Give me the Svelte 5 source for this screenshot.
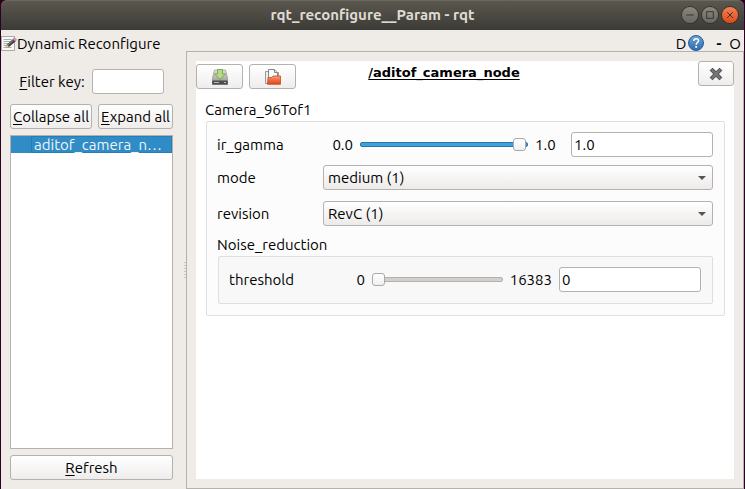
<script>
  let filter = $state('');
  let gamma = $state(1);
  let threshold = $state(0);
  let gammaText = $state('1.0');
  let thresholdText = $state('0');
  let mode = $state('medium (1)');
  let revision = $state('RevC (1)');
</script>

<div class="window">
  <header class="titlebar">
    <h1>rqt_reconfigure__Param - rqt</h1>
    <div class="controls">
      <button class="ctl" aria-label="Minimize">
        <svg viewBox="0 0 17 17"><path d="M4.5 8.5h8" /></svg>
      </button>
      <button class="ctl" aria-label="Maximize">
        <svg viewBox="0 0 17 17"><rect x="5" y="5" width="7" height="7" /></svg>
      </button>
      <button class="ctl close" aria-label="Close">
        <svg viewBox="0 0 17 17"><path d="M5.500 5.500l6 6M11.500 5.500l-6 6" /></svg>
      </button>
    </div>
  </header>

  <div class="dock">
    <svg class="dock-icon" viewBox="0 0 16 16">
      <rect x="0.5" y="0.5" width="13" height="14" fill="#f8f8f7" stroke="#aaa" />
      <path d="M2.5 3.5h8M2.5 5.5h7M2.5 7.5h5M2.5 9.5h4M2.5 11.5h8" stroke="#aaa" />
      <path d="M5 12l1-3.500L12 3l2.500 2.500L8 11z" fill="#444" />
      <path d="M5 12l1-3.500L8 11z" fill="#e8d67a" />
      <path d="M7 9l5.500-5" stroke="#888" />
      <path d="M12 3l1.500-1 2 1.500-1.200 2z" fill="#d890c0" stroke="#9a6590" stroke-width=".5" />
    </svg>
    <span class="dock-name">Dynamic Reconfigure</span>
    <button class="flat">D</button>
    <button class="flat help" aria-label="Help">
      <svg viewBox="0 0 16 16">
        <defs>
          <linearGradient id="blue" x2="0" y2="1">
            <stop stop-color="#6ba4d6" /><stop offset="1" stop-color="#2c6cac" />
          </linearGradient>
        </defs>
        <circle cx="8" cy="8" r="7.500" fill="url(#blue)" stroke="#245f9c" />
        <path d="M5.700 6C5.700 2.800 10.500 3 10.500 5.700 10.500 7.500 8.200 7.600 8.200 9.700" fill="none" stroke="#fff" stroke-width="1.500" />
        <rect x="7.300" y="11" width="1.800" height="1.800" fill="#fff" />
      </svg>
    </button>
    <button class="flat dash">-</button>
    <button class="flat">O</button>
  </div>

  <main>
    <aside>
      <div class="filter">
        <label for="filter"><u>F</u>ilter key:</label>
        <input id="filter" class="field" bind:value={filter} />
      </div>
      <div class="pair">
        <button class="btn"><u>C</u>ollapse all</button>
        <button class="btn"><u>E</u>xpand all</button>
      </div>
      <ul>
        <li><span>aditof_camera_n…</span></li>
      </ul>
      <button class="btn"><u>R</u>efresh</button>
    </aside>
    <div class="grip"><i></i></div>

    <section class="frame">
      <div class="sheet">
        <div class="top">
          <div class="heading">
            <div class="tools">
              <button class="btn" aria-label="Save parameters">
                <svg viewBox="0 0 16 16">
                  <defs>
                    <linearGradient id="disk" x2="0" y2="1">
                      <stop stop-color="#e4e4e2" /><stop offset="1" stop-color="#8a8a88" />
                    </linearGradient>
                  </defs>
                  <path d="M2.500 1h11L16 11v4.500H0V11z" fill="url(#disk)" stroke="#888" stroke-width=".6" />
                  <rect x=".3" y="11.500" width="15.400" height="4" rx=".8" fill="#4b4d4e" />
                  <path d="M2 13.500h5M12 13.500h2" stroke="#bbb" />
                  <path d="M5.500.500h5v4.500h3L8 10.300 2.500 5h3z" fill="#b4dc80" stroke="#6f9f45" stroke-width=".8" />
                </svg>
              </button>
              <button class="btn" aria-label="Load parameters">
                <svg viewBox="0 0 16 16">
                  <defs>
                    <linearGradient id="folder" x2="0" y2="1">
                      <stop stop-color="#f7a080" /><stop offset=".5" stop-color="#ec6d3e" /><stop offset="1" stop-color="#d9481b" />
                    </linearGradient>
                  </defs>
                  <path d="M.5 14.500V2.500h3l1 1h9v11z" fill="#eee" stroke="#999" />
                  <path d="M3.500 13V.500h6l3 3V13z" fill="#fafafa" stroke="#888" />
                  <path d="M9.500.500v3h3" fill="#ddd" stroke="#888" />
                  <path d="M2.500 15.300l.500-6.800h4l1-1.500h7.500v8.300z" fill="url(#folder)" stroke="#c74a20" stroke-width=".8" />
                </svg>
              </button>
            </div>
            <h2>/aditof_camera_node</h2>
          </div>
          <button class="btn remove" aria-label="Close node">
            <svg viewBox="0 0 16 16">
              <path d="M4.500 4.500l7 7M11.500 4.500l-7 7" stroke="#555" stroke-width="4" stroke-linecap="square" />
              <path d="M4.500 4.500l7 7M11.500 4.500l-7 7" stroke="#777" stroke-width="2" stroke-linecap="square" />
            </svg>
          </button>
        </div>

        <h3>Camera_96Tof1</h3>
        <div class="group">
          <div class="row">
            <label for="gamma">ir_gamma</label>
            <span class="min">0.0</span>
            <input id="gamma" class="full" type="range" min="0" max="1" step="0.01" bind:value={gamma} />
            <span class="max">1.0</span>
            <input class="field value" aria-label="ir_gamma value" bind:value={gammaText} />
          </div>
          <div class="row">
            <label for="mode">mode</label>
            <div class="combo">
              <select id="mode" bind:value={mode}><option>medium (1)</option></select>
            </div>
          </div>
          <div class="row spaced">
            <label for="revision">revision</label>
            <div class="combo">
              <select id="revision" bind:value={revision}><option>RevC (1)</option></select>
            </div>
          </div>
          <h3 class="sub">Noise_reduction</h3>
          <div class="group inner">
            <div class="row">
              <label for="threshold">threshold</label>
              <span class="min">0</span>
              <input id="threshold" type="range" min="0" max="16383" bind:value={threshold} />
              <span>16383</span>
              <input class="field value" aria-label="threshold value" bind:value={thresholdText} />
            </div>
          </div>
        </div>
      </div>
    </section>
  </main>
</div>

<style>
  :global(body) {
    margin: 0;
    background: #2c001e;
  }
  * {
    box-sizing: border-box;
  }
  .window {
    min-height: 100vh;
    display: flex;
    flex-direction: column;
    padding: 0 1px;
    font: 15px/20px Ubuntu, 'Noto Sans', sans-serif;
    color: #000;
  }
  button,
  input,
  select {
    font: inherit;
    color: inherit;
    margin: 0;
  }
  h1,
  h2,
  h3,
  ul {
    margin: 0;
    padding: 0;
  }
  u {
    text-underline-offset: 2px;
    text-decoration-skip-ink: none;
  }
  svg {
    display: block;
    width: 16px;
    height: 16px;
  }
  .titlebar {
    height: 30px;
    display: grid;
    grid-template-columns: 1fr auto 1fr;
    align-items: center;
    padding: 0 6px;
    border-radius: 6px 6px 0 0;
    background: linear-gradient(#5b584f, #3d3b37);
    box-shadow: inset 0 1px #6a675e;
  }
  h1 {
    grid-column: 2;
    font-size: 15px;
    font-weight: 700;
    color: #dfdbd2;
  }
  .controls {
    display: flex;
    justify-content: flex-end;
    gap: 4px;
  }
  .ctl {
    width: 16px;
    height: 16px;
    padding: 0;
    border: 0;
    border-radius: 50%;
    background: linear-gradient(#8a877e, #6a6760);
    box-shadow: 0 0 0 1px #34322e;
  }
  .ctl.close {
    background: linear-gradient(#f58052, #df4a18);
  }
  .ctl svg {
    fill: none;
    stroke: #35332f;
  }
  .dock {
    position: relative;
    height: 21px;
    flex: none;
    display: flex;
    align-items: center;
    padding: 6px 1px 0 0;
    background: #efebe7;
  }
  .dock-name {
    flex: 1;
  }
  .flat {
    padding: 0 2px;
    border: 0;
    background: none;
  }
  .help {
    padding: 0 0 1px;
  }
  .dash {
    padding: 0 6px 0 12px;
    font-weight: 700;
  }
  main {
    flex: 1;
    display: flex;
    background: #efebe7;
  }
  aside {
    width: 172px;
    display: flex;
    flex-direction: column;
    padding: 18px 0 9px 9px;
  }
  .filter {
    display: flex;
    justify-content: center;
    align-items: center;
    gap: 7px;
    margin-bottom: 10px;
  }
  .filter .field {
    width: 72px;
  }
  .field {
    height: 25px;
    min-width: 0;
    padding: 0 2px;
    border: 1px solid #b4b1ae;
    border-radius: 3px;
    background: #fff;
  }
  .pair {
    display: flex;
    gap: 6px;
    margin-bottom: 6px;
  }
  .pair .btn {
    flex: auto;
  }
  .btn {
    height: 25px;
    padding: 0;
    border: 1px solid #b4b1ae;
    border-radius: 3px;
    background: linear-gradient(#fff, #efedec);
    white-space: nowrap;
  }
  ul {
    flex: 1;
    margin-bottom: 6px;
    border: 1px solid #b4b1ae;
    background: #fff;
    list-style: none;
  }
  li {
    height: 17px;
    padding-left: 20px;
    background: #308cc6;
    color: #eff3f7;
  }
  li span {
    display: block;
    height: 17px;
    padding-left: 2px;
    border: 1px solid #2a7db2;
    line-height: 16px;
    white-space: nowrap;
  }
  .grip {
    width: 13px;
    display: flex;
    align-items: center;
    justify-content: flex-end;
  }
  .grip i {
    width: 2px;
    height: 17px;
    background: repeating-linear-gradient(#c8c5c1 0 1px, transparent 1px 3px);
  }
  .frame {
    flex: 1;
    display: flex;
    padding: 9px;
    border: 1px solid #b4b1ae;
  }
  .sheet {
    flex: 1;
    background: #fff;
  }
  .top {
    display: flex;
    gap: 6px;
    height: 39px;
  }
  .heading {
    flex: 1;
    display: grid;
    grid-template-columns: 1fr auto 1fr;
    align-items: start;
  }
  .tools {
    display: flex;
    gap: 6px;
    padding-top: 3px;
  }
  .tools .btn {
    width: 47px;
  }
  .tools svg,
  .remove svg {
    margin: auto;
  }
  .remove {
    width: 36px;
  }
  h2 {
    font: 700 13px/24px 'DejaVu Sans', sans-serif;
    text-decoration: underline;
    text-underline-offset: 2px;
    text-decoration-skip-ink: none;
  }
  h3 {
    padding-left: 9px;
    font-size: 15px;
    font-weight: 400;
  }
  .sub {
    padding: 0;
    margin-top: 9px;
  }
  .group {
    margin: 1px 9px 0 10px;
    padding: 10px 11px 11px 10px;
    border: 1px solid #dfdfdf;
    border-radius: 2px;
    background: #fcfcfc;
  }
  .inner {
    margin: 1px 0 0 1px;
    background: #f8f8f8;
  }
  .row {
    display: flex;
    align-items: center;
    gap: 7px;
    margin-bottom: 8px;
  }
  .spaced {
    margin-top: 11px;
  }
  .inner .row {
    margin: 0;
  }
  .row label {
    width: 99px;
  }
  .min {
    width: 30px;
    text-align: right;
  }
  .max {
    width: 29px;
  }
  .value {
    width: 142px;
  }
  .combo {
    position: relative;
    flex: 1;
    display: flex;
  }
  .combo::after {
    content: '';
    position: absolute;
    right: 7px;
    top: 11px;
    border: 4px solid transparent;
    border-top-color: #555;
    border-bottom: 0;
    pointer-events: none;
  }
  select {
    appearance: none;
    flex: 1;
    height: 25px;
    padding: 0 4px;
    border: 1px solid #b4b1ae;
    border-radius: 3px;
    background: linear-gradient(#fff, #edebea);
  }
  input[type='range'] {
    appearance: none;
    flex: 1;
    min-width: 0;
    height: 14px;
    background: none;
  }
  input[type='range']::-webkit-slider-runnable-track {
    height: 5px;
    border: 1px solid #b4b1ae;
    border-radius: 2px;
    background: #d2cfcc;
  }
  .full::-webkit-slider-runnable-track {
    border-color: #2b74a5 !important;
    background: #3fa0e0 !important;
  }
  input[type='range']::-webkit-slider-thumb {
    appearance: none;
    width: 13px;
    height: 13px;
    margin: -5px -1px 0;
    border: 1px solid #aaa;
    border-radius: 3px;
    background: linear-gradient(#fff, #f0f0f0);
  }
</style>
